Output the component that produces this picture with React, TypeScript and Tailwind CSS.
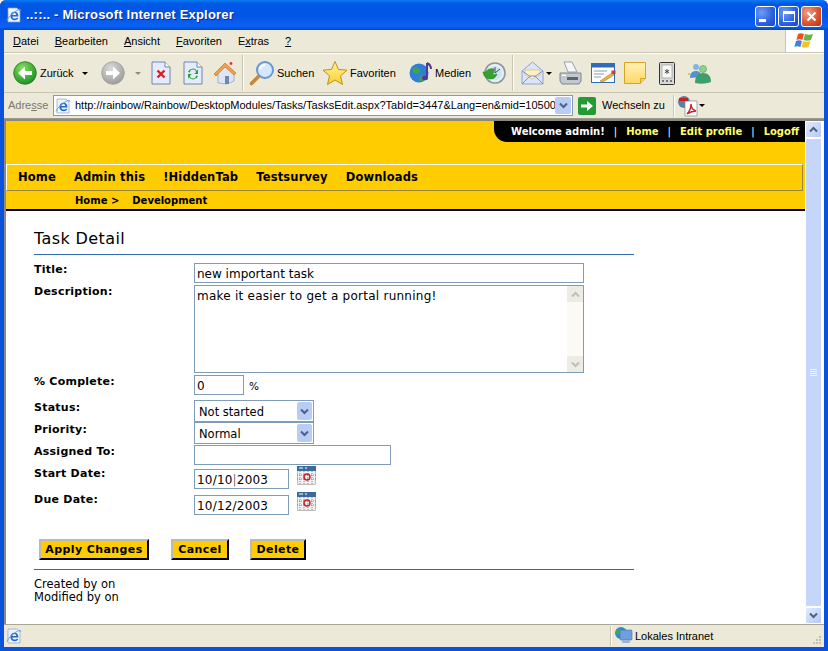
import React from "react";

const chrome = "font-['Liberation_Sans',Arial,sans-serif]";
const verdana = "font-['DejaVu_Sans',sans-serif]";

function IeIcon({ size = 16 }: { size?: number }) {
  return (
    <svg width={size} height={size} viewBox="0 0 16 16" className="shrink-0">
      <path d="M2 1h9l3 3v11H2z" fill="#eef2fa" stroke="#8ea2c6" strokeWidth="0.7" />
      <path d="M12.400 9.400H6.300c.2 1.500 1.300 2.200 2.500 2.200 1 0 1.800-.4 2.300-1.200l1.200.8c-.8 1.300-2 2-3.600 2-2.500 0-4.300-1.700-4.300-4.200S6.100 4.800 8.600 4.800s3.900 1.800 3.800 4.600zM6.400 8h3.900c-.1-1.200-.8-1.900-1.900-1.900S6.600 6.800 6.400 8z" fill="#1f6bd0" />
      <path d="M1 13.500C2 10 8 4.500 13 2.500c1.500-.5 2 .3 1.600 1.500" fill="none" stroke="#5f9be6" strokeWidth="0.9" />
    </svg>
  );
}

function RoundArrow({ grey = false, size = 24 }: { grey?: boolean; size?: number }) {
  const id = grey ? "argrey" : "argreen";
  return (
    <svg width={size} height={size} viewBox="0 0 24 24" className="shrink-0">
      <defs>
        <radialGradient id={id} cx="0.4" cy="0.3" r="0.8">
          <stop offset="0" stopColor={grey ? "#dcdcdc" : "#86e060"} />
          <stop offset="1" stopColor={grey ? "#949494" : "#0f8a1a"} />
        </radialGradient>
      </defs>
      <circle cx="12" cy="12" r="11.300" fill={`url(#${id})`} stroke={grey ? "#a0a0a0" : "#1d7a24"} strokeWidth="0.8" />
      {grey ? (
        <path d="M5 10h7V5.500l7 6.500-7 6.500V14H5z" fill="#fff" />
      ) : (
        <path d="M19 10h-7V5.500L5 12l7 6.500V14h7z" fill="#fff" />
      )}
    </svg>
  );
}

function Doc({ children }: { children: React.ReactNode }) {
  return (
    <svg width="20" height="24" viewBox="0 0 20 24" className="shrink-0">
      <path d="M1 1h13l5 5v17H1z" fill="#e4ebfa" stroke="#6f84b4" />
      <path d="M14 1v5h5" fill="#fff" stroke="#6f84b4" />
      {children}
    </svg>
  );
}

function HomeIcon() {
  return (
    <svg width="24" height="24" viewBox="0 0 24 24" className="shrink-0">
      <path d="M5 12v10l9 1 7-3V11l-8-7z" fill="#dde5f6" stroke="#8b9bc0" strokeWidth="0.7" />
      <path d="M1 13 12 2l11 10-2 2-9-8-9 9z" fill="#f0a048" stroke="#c4762a" strokeWidth="0.7" />
      <path d="M12 15h4v8h-4z" fill="#6f86b8" />
      <circle cx="18" cy="2.500" r="1.400" fill="#d33" />
    </svg>
  );
}

function SearchIcon() {
  return (
    <svg width="26" height="26" viewBox="0 0 26 26" className="shrink-0">
      <path d="M10 16 2.500 23.500" stroke="#c9853a" strokeWidth="3.600" strokeLinecap="round" />
      <circle cx="16" cy="10" r="8" fill="#d4e9ff" stroke="#6a96d0" strokeWidth="2" />
      <path d="M11 9c1-3 3-4 5-4" stroke="#fff" strokeWidth="1.800" fill="none" />
    </svg>
  );
}

function StarIcon() {
  return (
    <svg width="26" height="26" viewBox="0 0 26 26" className="shrink-0">
      <defs>
        <linearGradient id="star" x1="0" y1="0" x2="0" y2="1">
          <stop offset="0" stopColor="#fff3a0" />
          <stop offset="1" stopColor="#fbd02a" />
        </linearGradient>
      </defs>
      <path d="M13 1.500 16.400 9.400 25 10.200 18.500 15.900 20.500 24.500 13 20 5.500 24.500 7.500 15.900 1 10.200 9.600 9.400z" fill="url(#star)" stroke="#b8921c" strokeWidth="1" />
    </svg>
  );
}

function MediaIcon() {
  return (
    <svg width="24" height="24" viewBox="0 0 24 24" className="shrink-0">
      <circle cx="10" cy="12" r="9.500" fill="#2f7fd6" />
      <path d="M4 7c3-2 6 0 7 2s-2 4-4 4-4-3-3-6zM12 15c2-1 4 0 4 2s-3 4-5 3 0-4 1-5z" fill="#3fa648" />
      <path d="M18 2v14" stroke="#4f3a96" strokeWidth="2" />
      <path d="M18 2c2 1 4 3 4 6" stroke="#4f3a96" strokeWidth="2" fill="none" />
      <ellipse cx="16" cy="17" rx="3" ry="2.200" fill="#4f3a96" />
    </svg>
  );
}

function HistoryIcon() {
  return (
    <svg width="24" height="24" viewBox="0 0 24 24" className="shrink-0">
      <circle cx="13" cy="12" r="10" fill="#e9eef2" stroke="#8c979c" strokeWidth="1.600" />
      <circle cx="13" cy="12" r="7" fill="#cfe4f2" />
      <path d="M13 6v6l5-4" stroke="#445" strokeWidth="1" fill="none" />
      <path d="M1 11c1 6 5 7 8 7 3 0 5-2 6-5l-4 1 1-6c-3-1-7 0-8 3z" fill="#31a32f" stroke="#1f7a1f" strokeWidth="0.5" />
    </svg>
  );
}

function MailIcon() {
  return (
    <svg width="23" height="24" viewBox="0 0 23 24" className="shrink-0">
      <path d="M1 10 11.500 1 22 10v13H1z" fill="#dbe5f8" stroke="#8ba3d2" />
      <path d="M4 9h15v5l-7.500 4L4 14z" fill="#fff0c4" stroke="#d6b26a" strokeWidth="0.6" />
      <path d="M1 23 9 15h5l8 8M1 10l9 6M22 10l-9 6" fill="none" stroke="#7d97cc" />
    </svg>
  );
}

function PrintIcon() {
  return (
    <svg width="24" height="24" viewBox="0 0 24 24" className="shrink-0">
      <path d="M5 1h8l5 10H9z" fill="#f5f6f7" stroke="#9aa0a8" />
      <path d="M1 12h21v8l-2 3H3l-2-3z" fill="#c2c8cf" stroke="#7e858d" />
      <rect x="8" y="16" width="11" height="3" fill="#5d646c" />
      <rect x="3" y="13.500" width="4" height="1.500" fill="#fff" />
    </svg>
  );
}

function EditIcon() {
  return (
    <svg width="25" height="21" viewBox="0 0 25 21" className="shrink-0">
      <rect x="0.500" y="0.500" width="23" height="19" fill="#fff" stroke="#2d6cb8" />
      <rect x="0.500" y="0.500" width="23" height="4" fill="#2d6cb8" />
      <path d="M3 8h13M3 11h10M3 14h7" stroke="#8a98ad" />
      <path d="M9 18 21 10l2 2-11 7z" fill="#e9b23c" stroke="#aa6f1a" strokeWidth="0.5" />
      <rect x="20.500" y="7.500" width="4" height="3.500" fill="#d9363a" />
    </svg>
  );
}

function NoteIcon() {
  return (
    <svg width="22" height="22" viewBox="0 0 22 22" className="shrink-0">
      <defs>
        <linearGradient id="note" x1="0" y1="0" x2="0" y2="1">
          <stop offset="0" stopColor="#fff2b8" />
          <stop offset="1" stopColor="#ffd866" />
        </linearGradient>
      </defs>
      <path d="M0.500 0.500h21v16l-5 5h-16z" fill="url(#note)" stroke="#d9a520" />
      <path d="M16.500 21.500v-5h5" fill="#f2cf70" stroke="#d9a520" />
    </svg>
  );
}

function PdaIcon() {
  return (
    <svg width="16" height="23" viewBox="0 0 16 23" className="shrink-0">
      <rect x="0.500" y="0.500" width="15" height="22" rx="1" fill="#d8d8d4" stroke="#333" />
      <rect x="3" y="3" width="10" height="13" fill="#f8f8f8" stroke="#777" strokeWidth="0.5" />
      <path d="M8 7v5M5.800 8.200l4.400 2.600M10.200 8.200l-4.400 2.600" stroke="#333" strokeWidth="0.8" />
      <path d="M3 19h2M7 19h2M11 19h2" stroke="#555" strokeWidth="1.400" />
    </svg>
  );
}

function MessengerIcon() {
  return (
    <svg width="24" height="22" viewBox="0 0 24 22" className="shrink-0">
      <circle cx="9" cy="5" r="3" fill="#7db7e8" />
      <path d="M3 16c0-5 2-7 6-7s5 2 5 6z" fill="#4f93d6" />
      <circle cx="16" cy="7" r="3.600" fill="#8fd08a" stroke="#4e9a5a" strokeWidth="0.5" />
      <path d="M8 21c0-7 3-10 8-10s8 3 8 9c-5 2-11 2-16 1z" fill="#3f9f6c" />
      <circle cx="2" cy="12" r="1" fill="#e9b23c" />
    </svg>
  );
}

function WindowsFlag() {
  return (
    <svg width="22" height="20" viewBox="0 0 22 20">
      <path d="M4 3c2-1 3-1 6 0l-1.600 6c-2-1-4-1-6 0z" fill="#e8502c" />
      <path d="M11 3c3 1 5 1 8 0l-2 6c-3 1-5 1-7.500 0z" fill="#6cb43f" />
      <path d="M2 10c2-1 4-1 6 0l-1.600 6c-2-1-4-1-6 0z" fill="#3d82d8" />
      <path d="M9 10c2.500 1 5 1 7.500 0l-2 6c-3 1-5 1-7 0z" fill="#f5c22e" />
    </svg>
  );
}

function PdfIcon() {
  return (
    <svg width="20" height="22" viewBox="0 0 20 22" className="shrink-0">
      <circle cx="6" cy="7" r="6" fill="#5d7fa8" />
      <path d="M7 6h12v15H7z" fill="#fff" stroke="#888" strokeWidth="0.7" />
      <path d="M9 19c3-3 4-6 4-10 0 4 2 6 5 7-4 0-6 1-9 3z" fill="none" stroke="#c8202a" strokeWidth="1.400" />
      <rect x="1" y="3" width="9" height="3" fill="#c8202a" />
    </svg>
  );
}

function IntranetIcon() {
  return (
    <svg width="19" height="18" viewBox="0 0 19 18" className="shrink-0">
      <circle cx="7" cy="6" r="6" fill="#2f8fc8" />
      <path d="M2 4c2-2 5-2 6 0s-2 4-4 3-2-2-2-3z" fill="#47a84a" />
      <rect x="6" y="3" width="12" height="10" rx="1" fill="#6f9fdc" stroke="#3f6fb0" strokeWidth="0.6" />
      <rect x="8" y="13" width="8" height="3" fill="#9cb4d8" />
    </svg>
  );
}

function Calendar() {
  return (
    <svg width="19" height="19" viewBox="0 0 19 19" className="shrink-0">
      <rect x="0.500" y="0.500" width="18" height="18" fill="#f1f1f1" stroke="#9a9a9a" strokeWidth="0.6" />
      <rect x="0" y="0" width="19" height="5" fill="#3d6a9c" />
      <path d="M2 2h4M8 2h2" stroke="#fff" strokeWidth="1" />
      <path d="M3 5v14M7 5v14M11 5v14M15 5v14M0 9h19M0 13h19" stroke="#6d6d6d" strokeWidth="0.8" strokeDasharray="1 1" />
      <circle cx="10" cy="11" r="3" fill="none" stroke="#c8202a" strokeWidth="1.400" />
    </svg>
  );
}

function Chevron({ up = false, color = "#4d6185" }: { up?: boolean; color?: string }) {
  return (
    <svg width="9" height="7" viewBox="0 0 9 7">
      <path d={up ? "M1 5.500 4.500 2 8 5.500" : "M1 1.500 4.500 5 8 1.500"} fill="none" stroke={color} strokeWidth="2" />
    </svg>
  );
}

function ScrollBtn({ up = false }: { up?: boolean }) {
  return (
    <div className="flex h-[17px] w-[17px] shrink-0 items-center justify-center rounded-[2px] border border-white bg-[linear-gradient(135deg,#e2ebfd,#b4c8f6)]">
      <Chevron up={up} />
    </div>
  );
}

function Caret() {
  return <div className="h-0 w-0 border-x-[3px] border-t-[3px] border-x-transparent border-t-black" />;
}

function Sep({ className = "" }: { className?: string }) {
  return <div className={`w-[2px] shrink-0 border-l border-r border-l-[#c8c5b2] border-r-white ${className}`} />;
}

function U({ children }: { children: string }) {
  return <span className="underline">{children}</span>;
}

function WinBtn({ children, red = false }: { children: React.ReactNode; red?: boolean }) {
  return (
    <div
      className={`flex h-[21px] w-[21px] items-center justify-center rounded-[3px] border border-white ${
        red
          ? "bg-[radial-gradient(circle_at_30%_30%,#f0a088,#d8502c_60%,#b83010)]"
          : "bg-[radial-gradient(circle_at_30%_30%,#6f9cf5,#2a5fe0_60%,#1c45c8)]"
      }`}
    >
      {children}
    </div>
  );
}

function Row({ label, height, labelMt = 0, children }: { label: string; height: number; labelMt?: number; children: React.ReactNode }) {
  return (
    <div className="flex" style={{ height }}>
      <div className="w-[160px] shrink-0 text-[11px] font-bold leading-[14px] tracking-[0.25px] text-black" style={{ marginTop: labelMt }}>
        {label}
      </div>
      <div className="flex-1">{children}</div>
    </div>
  );
}

const inputCls =
  "flex h-[20px] items-center border border-[#7f9db9] bg-white pl-[2px] pt-[2px] text-[12px] text-black leading-none";

function SelectBox({ value }: { value: string }) {
  return (
    <div className="flex h-[22px] w-[120px] items-center justify-between border border-[#7f9db9] bg-white pl-[4px] pr-[1px] text-[11.5px] text-black">
      <span className="pt-[3px]">{value}</span>
      <div className="flex h-[18px] w-[15px] items-center justify-center rounded-[2px] bg-[#b8ccf6]">
        <Chevron />
      </div>
    </div>
  );
}

function ActionBtn({ children, w, ml }: { children: string; w: number; ml: number }) {
  return (
    <button
      className="flex h-[21px] items-center justify-center border-2 border-b-black border-l-[#b9b9b9] border-r-black border-t-[#b9b9b9] bg-[#ffcc00] pt-[1px] text-[11px] font-bold tracking-[0.4px] text-black"
      style={{ width: w, marginLeft: ml }}
    >
      {children}
    </button>
  );
}

export default function App() {
  return (
    <div className="flex h-[651px] w-[828px] flex-col overflow-hidden rounded-t-[6px] bg-[#0a52dc]">
      {/* title bar */}
      <div className="flex h-[30px] shrink-0 items-center bg-[linear-gradient(#0a7cf0_0%,#0058e6_12%,#0454e4_50%,#0a62f4_88%,#0046cc_100%)] pl-[6px] pr-[6px]">
        <IeIcon size={16} />
        <span className={`ml-[4px] text-[13px] font-bold tracking-[0.2px] text-white [text-shadow:1px_1px_0_#0a2a8c] ${chrome}`}>
          ..::.. - Microsoft Internet Explorer
        </span>
        <div className="ml-auto mt-[2px] flex gap-[2px]">
          <WinBtn>
            <div className="mt-[9px] mr-[6px] h-[3px] w-[7px] bg-white" />
          </WinBtn>
          <WinBtn>
            <div className="h-[11px] w-[12px] border border-t-[3px] border-white" />
          </WinBtn>
          <WinBtn red>
            <svg width="11" height="11" viewBox="0 0 11 11">
              <path d="M1.500 1.500l8 8M9.500 1.500l-8 8" stroke="#fff" strokeWidth="2" />
            </svg>
          </WinBtn>
        </div>
      </div>

      <div className={`mx-[4px] flex min-h-0 flex-1 flex-col bg-[#ece9d8] ${chrome}`}>
        {/* menu */}
        <div className="flex h-[23px] shrink-0 border-b border-[#c8c5b2]">
          <div className="flex flex-1 items-center gap-[16px] pl-[9px] pt-[1px] text-[11px] text-black">
            <span><U>D</U>atei</span>
            <span><U>B</U>earbeiten</span>
            <span><U>A</U>nsicht</span>
            <span><U>F</U>avoriten</span>
            <span>E<U>x</U>tras</span>
            <span><U>?</U></span>
          </div>
          <div className="flex w-[39px] items-center justify-center border-l border-[#c8c5b2] bg-white">
            <WindowsFlag />
          </div>
        </div>

        {/* toolbar */}
        <div className="flex h-[40px] shrink-0 items-center border-b border-t border-b-[#c8c5b2] border-t-white pl-[9px] text-[11px] text-black">
          <RoundArrow />
          <span className="ml-[3px] w-[33px] shrink-0">Zurück</span>
          <div className="ml-[9px]"><Caret /></div>
          <div className="ml-[13px]"><RoundArrow grey /></div>
          <div className="ml-[10px] opacity-40"><Caret /></div>
          <div className="ml-[10px]">
            <Doc>
              <path d="M6.500 9.500l7 7M13.500 9.500l-7 7" stroke="#d82020" strokeWidth="2.400" />
            </Doc>
          </div>
          <div className="ml-[12px]">
            <Doc>
              <path d="M5 11a5 5 0 0 1 9-1l1-2v5h-4l2-1.500a3 3 0 0 0-6 0zM15 15a5 5 0 0 1-9 1l-1 2v-5h4l-2 1.500a3 3 0 0 0 6 0z" fill="#28a028" />
            </Doc>
          </div>
          <div className="ml-[10px]"><HomeIcon /></div>
          <Sep className="ml-[5px] h-[36px]" />
          <div className="ml-[5px]"><SearchIcon /></div>
          <span className="ml-[2px] w-[34px] shrink-0">Suchen</span>
          <div className="ml-[11px]"><StarIcon /></div>
          <span className="ml-[2px] w-[46px] shrink-0">Favoriten</span>
          <div className="ml-[13px]"><MediaIcon /></div>
          <span className="ml-[2px] w-[34px] shrink-0">Medien</span>
          <div className="ml-[13px]"><HistoryIcon /></div>
          <Sep className="ml-[6px] h-[36px]" />
          <div className="ml-[7px]"><MailIcon /></div>
          <div className="ml-[2px]"><Caret /></div>
          <div className="ml-[7px]"><PrintIcon /></div>
          <div className="ml-[8px]"><EditIcon /></div>
          <div className="ml-[8px]"><NoteIcon /></div>
          <div className="ml-[13px]"><PdaIcon /></div>
          <div className="ml-[12px]"><MessengerIcon /></div>
        </div>

        {/* address bar */}
        <div className="flex h-[26px] shrink-0 items-center border-b border-[#9d9b8c] pl-[4px] text-[11px]">
          <span className="w-[45px] shrink-0 text-[#7a7868]">Adre<U>s</U>se</span>
          <div className="flex h-[21px] w-[520px] shrink-0 items-center overflow-hidden border border-[#7f9db9] bg-white pl-[1px]">
            <IeIcon size={16} />
            <span className="ml-[4px] w-[480px] shrink-0 overflow-hidden whitespace-nowrap text-[11px] text-black">
              http://rainbow/Rainbow/DesktopModules/Tasks/TasksEdit.aspx?TabId=3447&amp;Lang=en&amp;mid=10500
            </span>
            <div className="ml-auto mr-[1px] flex h-[17px] w-[16px] shrink-0 items-center justify-center rounded-[2px] bg-[#b8ccf6]">
              <Chevron />
            </div>
          </div>
          <svg width="18" height="18" viewBox="0 0 18 18" className="ml-[5px] shrink-0">
            <rect width="18" height="18" rx="2" fill="#239a34" />
            <path d="M3 7.500h6V4l6 5-6 5v-3.500H3z" fill="#fff" />
          </svg>
          <span className="ml-[6px] w-[60px] shrink-0 whitespace-nowrap text-black">Wechseln zu</span>
          <Sep className="ml-[11px] h-[22px]" />
          <div className="ml-[3px]"><PdfIcon /></div>
          <div className="ml-[1px]"><Caret /></div>
        </div>

        {/* page + scrollbar */}
        <div className="flex min-h-0 flex-1 border-l-2 border-t-2 border-l-[#8a8a80] border-t-[#8a8a80] bg-white pr-[2px]">
          <div className={`min-w-0 flex-1 ${verdana}`}>
            <div className="h-[43px] bg-[#ffcc00]">
              <div className="ml-auto flex h-[21px] w-[311px] items-center justify-end gap-[9px] rounded-bl-[13px] bg-black pr-[6px] text-[10px] font-bold text-white">
                <span>Welcome admin!</span>
                <span className="font-normal">|</span>
                <span className="text-[#ffff66]">Home</span>
                <span className="font-normal">|</span>
                <span className="text-[#ffff66]">Edit profile</span>
                <span className="font-normal">|</span>
                <span className="text-[#ffff66]">Logoff</span>
              </div>
            </div>
            <div className="bg-[#ffcc00] pr-[2px]">
              <div className="flex h-[27px] items-center gap-[18px] border border-b-[#9a8a40] border-l-white border-r-[#9a8a40] border-t-white pl-[11px] text-[11.5px] font-bold tracking-[0.15px] text-black">
                <span>Home</span>
                <span>Admin this</span>
                <span>!HiddenTab</span>
                <span>Testsurvey</span>
                <span>Downloads</span>
              </div>
            </div>
            <div className="flex h-[20px] items-center border-b-2 border-black bg-[#ffcc00] pl-[69px] text-[10px] font-bold text-black">
              <span>Home &gt;</span>
              <span className="ml-[13px]">Development</span>
            </div>

            {/* form */}
            <div className="pl-[28px]">
              <div className="w-[600px] border-b border-[#2e6ab0] pb-[5px] pt-[18px] text-[16px] leading-[20px] tracking-[0.4px] text-black">
                Task Detail
              </div>
              <div className="mt-[8px]">
                <Row label="Title:" height={22}>
                  <div className={`${inputCls} w-[390px]`}>new important task</div>
                </Row>
                <Row label="Description:" height={90}>
                  <div className="flex h-[88px] w-[390px] border border-[#7f9db9] bg-white pl-[2px] text-[12px] tracking-[0.25px] text-black">
                    <span className="flex-1 pt-[1px]">make it easier to get a portal running!</span>
                    <div className="flex w-[16px] flex-col justify-between bg-[#fbfaf5]">
                      <div className="flex h-[16px] items-center justify-center bg-[#ecebe4]"><Chevron up color="#c0c0b8" /></div>
                      <div className="flex h-[16px] items-center justify-center bg-[#ecebe4]"><Chevron color="#c0c0b8" /></div>
                    </div>
                  </div>
                </Row>
                <Row label="% Complete:" height={25}>
                  <div className="flex items-end">
                    <div className={`${inputCls} w-[50px]`}>0</div>
                    <span className="ml-[5px] text-[10.5px] text-black">%</span>
                  </div>
                </Row>
                <Row label="Status:" height={22} labelMt={1}>
                  <SelectBox value="Not started" />
                </Row>
                <Row label="Priority:" height={23} labelMt={1}>
                  <SelectBox value="Normal" />
                </Row>
                <Row label="Assigned To:" height={24}>
                  <div className={`${inputCls} w-[197px]`} />
                </Row>
                <Row label="Start Date:" height={26} labelMt={-2}>
                  <div className="flex items-start">
                    <div className={`${inputCls} w-[95px] tracking-[0.2px]`}>
                      10/10<span className="font-light text-black">|</span>2003
                    </div>
                    <div className="ml-[8px] mt-[-3px]"><Calendar /></div>
                  </div>
                </Row>
                <Row label="Due Date:" height={26} labelMt={-2}>
                  <div className="flex items-start">
                    <div className={`${inputCls} w-[95px] tracking-[0.2px]`}>10/12/2003</div>
                    <div className="ml-[8px] mt-[-3px]"><Calendar /></div>
                  </div>
                </Row>
              </div>
              <div className="mt-[18px] flex">
                <ActionBtn w={110} ml={5}>Apply Changes</ActionBtn>
                <ActionBtn w={58} ml={22}>Cancel</ActionBtn>
                <ActionBtn w={56} ml={21}>Delete</ActionBtn>
              </div>
              <div className="mt-[9px] w-[600px] border-t border-[#2e6ab0] pt-[8px] text-[11.5px] leading-[13px] text-black">
                <div>Created by on</div>
                <div>Modified by on</div>
              </div>
            </div>
          </div>

          {/* page scrollbar */}
          <div className="flex w-[17px] shrink-0 flex-col bg-[#f3f6fd]">
            <ScrollBtn up />
            <div className="flex flex-1 flex-col items-center justify-center gap-[1px] rounded-[2px] border border-white bg-[#c6d6fa]">
              <div className="h-[1px] w-[7px] bg-[#eef3fe]" />
              <div className="h-[1px] w-[7px] bg-[#eef3fe]" />
              <div className="h-[1px] w-[7px] bg-[#eef3fe]" />
              <div className="h-[1px] w-[7px] bg-[#eef3fe]" />
            </div>
            <ScrollBtn />
          </div>
        </div>

        {/* status bar */}
        <div className="flex h-[23px] shrink-0 items-center border-t border-[#a8a698] text-[11px] text-black">
          <div className="ml-[2px]"><IeIcon size={16} /></div>
          <Sep className="ml-[588px] h-[20px]" />
          <div className="ml-[2px]"><IntranetIcon /></div>
          <span className="ml-[2px]">Lokales Intranet</span>
          <svg width="10" height="10" viewBox="0 0 10 10" className="ml-auto mr-[2px] mt-[8px] shrink-0">
            <path d="M7 1h2v2H7zM4 4h2v2H4zM7 4h2v2H7zM1 7h2v2H1zM4 7h2v2H4zM7 7h2v2H7z" fill="#c4c1ae" />
          </svg>
        </div>
      </div>
      <div className="h-[4px] shrink-0" />
    </div>
  );
}
